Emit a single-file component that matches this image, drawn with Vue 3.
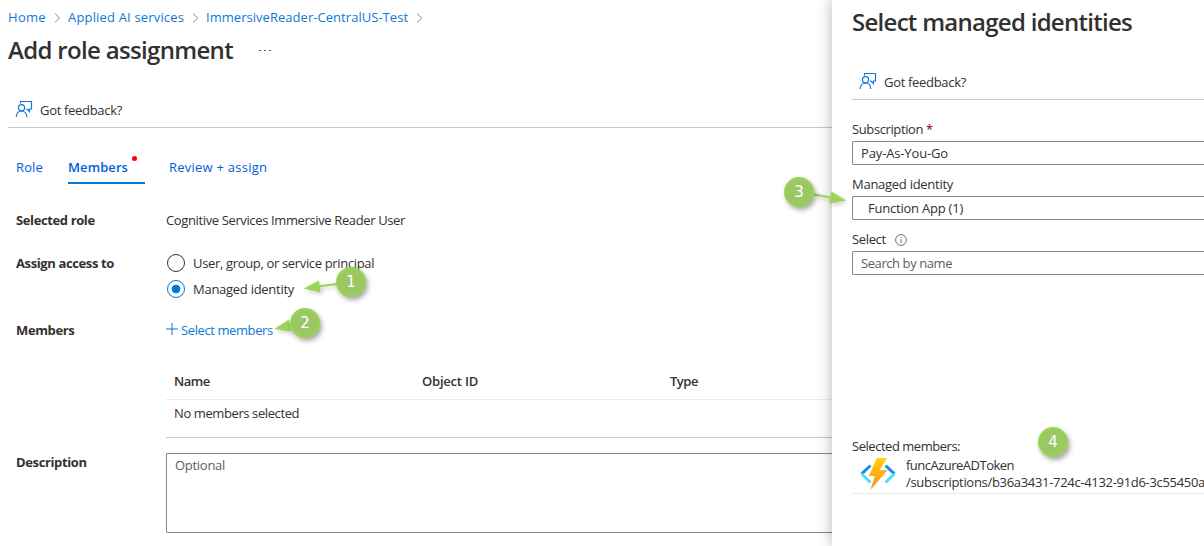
<script setup>
const crumbs = [
  { text: 'Home', cls: 'c1' },
  { text: 'Applied AI services', cls: 'c2' },
  { text: 'ImmersiveReader-CentralUS-Test', cls: 'c3' },
]
const pins = [
  { n: 1, cls: 'p1' },
  { n: 2, cls: 'p2' },
  { n: 3, cls: 'p3' },
  { n: 4, cls: 'p4' },
]
</script>

<template>
  <div class="page">
    <main class="blade">
      <nav class="crumbs">
        <template v-for="c in crumbs" :key="c.text">
          <a :class="c.cls">{{ c.text }}</a>
          <svg class="chev" width="7" height="10" viewBox="0 0 7 10"><path d="M1 .6 5.6 5 1 9.4" /></svg>
        </template>
      </nav>
      <header class="title-row">
        <h1>Add role assignment</h1>
        <svg class="dots" width="12" height="3" viewBox="0 0 12 3"><path d="M0 1h2v1H0zM5 1h2v1H5zM10 1h2v1h-2z" /></svg>
      </header>
      <div class="command">
        <svg class="feedback" width="18" height="18" viewBox="0 0 18 18">
          <path d="M5.500 3.500v-2h11v7.500h-2v2.500l-2.500-2.500h-1" /><circle cx="6.500" cy="7.800" r="3.100" /><path d="M1.200 17c.3-3.800 2.300-6 5.300-6s5 2.200 5.300 6" />
        </svg>
        <span class="ask">Got feedback?</span>
      </div>
      <div class="tabs">
        <a class="tab role">Role</a>
        <a class="tab active">Members<i class="dot"></i></a>
        <a class="tab review">Review + assign</a>
      </div>
      <div class="row selected">
        <b>Selected role</b><span class="cog">Cognitive Services Immersive Reader User</span>
      </div>
      <div class="row access">
        <b>Assign access to</b>
        <div class="radios">
          <label><i class="radio"></i><span class="usr">User, group, or service principal</span></label>
          <label><i class="radio on"></i><span class="mi">Managed identity</span></label>
        </div>
      </div>
      <div class="row members">
        <b>Members</b>
        <a class="select"><svg width="12" height="12" viewBox="0 0 12 12"><path d="M6 0v12M0 6h12" /></svg><span>Select members</span></a>
      </div>
      <div class="table">
        <div class="th"><span>Name</span><span class="oid">Object ID</span><span>Type</span></div>
        <div class="td">No members selected</div>
      </div>
      <div class="row desc">
        <b>Description</b>
        <div class="area">Optional</div>
      </div>
    </main>

    <aside class="panel">
      <h2>Select managed identities</h2>
      <div class="command">
        <svg class="feedback" width="18" height="18" viewBox="0 0 18 18">
          <path d="M5.500 3.500v-2h11v7.500h-2v2.500l-2.500-2.500h-1" /><circle cx="6.500" cy="7.800" r="3.100" /><path d="M1.200 17c.3-3.800 2.300-6 5.300-6s5 2.200 5.300 6" />
        </svg>
        <span class="ask">Got feedback?</span>
      </div>
      <div class="label sub">Subscription <em>*</em></div>
      <div class="input pay">Pay-As-You-Go</div>
      <div class="label mi">Managed identity</div>
      <div class="input fn">Function App (1)</div>
      <div class="label sel">Select
        <svg width="12" height="12" viewBox="0 0 12 12"><circle cx="6" cy="6" r="5.4" /><path d="M6 5v4M6 2.800v1.200" /></svg>
      </div>
      <div class="input search">Search by name</div>
      <div class="picked">
        <div class="heading">Selected members:</div>
        <div class="item">
          <svg class="func" width="36" height="32" viewBox="0 0 36 32">
            <defs>
              <linearGradient id="bolt" x1="0" y1="0" x2="0" y2="1"><stop offset="0" stop-color="#fed20c" /><stop offset=".5" stop-color="#fcae17" /><stop offset="1" stop-color="#f78d1e" /></linearGradient>
            </defs>
            <path d="M10.500 7.500 1.600 15.800" class="dark" /><path d="m1.600 15.800 8.900 8.700" class="light" />
            <path d="m25.500 7.500 8.900 8.300" class="dark" /><path d="m34.400 15.800-8.900 8.700" class="light" />
            <path d="M16.800 0H27l-7.200 12h7.700L10.400 32l4.400-14H8.800z" fill="url(#bolt)" />
          </svg>
          <div class="lines"><div class="name">funcAzureADToken</div><div class="path">/subscriptions/b36a3431-724c-4132-91d6-3c55450a</div></div>
        </div>
      </div>
    </aside>

    <svg class="arrows" width="1204" height="546" viewBox="0 0 1204 546">
      <path d="M337 284 318 286.500" /><path class="head" d="m303.500 288.500 15.500-8 1.500 12z" />
      <path d="m293 325-4 .5" /><path class="head" d="m274 329 15-9.500 2 12z" />
      <path d="m814 194.500 17 3" /><path class="head" d="m846 200.500-14.500-9-2.500 12z" />
    </svg>
    <div v-for="p in pins" :key="p.n" class="pin" :class="p.cls">{{ p.n }}</div>
  </div>
</template>

<style>
body { background: #fff; overflow: hidden; }
</style>
<style scoped>
* { box-sizing: border-box; }
.page { position: relative; display: flex; width: 1204px; height: 546px; overflow: hidden; font: 13px/18px "Open Sans", sans-serif; color: #323130; background: #fff; white-space: nowrap; letter-spacing: -.35px; }
svg { flex: none; fill: none; }
.blade { width: 832px; height: 546px; padding: 8px 0 0 8px; overflow: hidden; }
a { color: #0f78d4; }
.crumbs { display: flex; align-items: center; height: 18px; }
.c1 { width: 38px; letter-spacing: .3px; }
.c2 { width: 116px; letter-spacing: .17px; }
.c3 { width: 202px; letter-spacing: .04px; }
.chev { margin: 1px 7px 0 8px; stroke: #8a8886; }
.title-row { display: flex; align-items: center; height: 33px; margin-top: 7px; }
h1, h2 { margin: 0; font-size: 24px; line-height: 32px; font-weight: 600; }
h1 { width: 225px; letter-spacing: -.67px; }
.dots { margin: 2px 0 0 26px; fill: #605e5c; }
.command { display: flex; align-items: center; height: 35px; border-bottom: 1px solid #c8c6c4; padding-left: 7px; }
.blade .command { margin-top: 27px; }
.feedback { stroke: #0f78d4; stroke-width: 1.2; margin-top: -2px; }
.ask { margin-left: 7px; letter-spacing: -.31px; }
.tabs { display: flex; height: 28px; margin-top: 28px; padding-left: 8px; line-height: 23px; }
.tab { color: #015cda; }
.role { width: 52px; letter-spacing: .14px; }
.active { position: relative; width: 77px; font-weight: 600; letter-spacing: .09px; border-bottom: 2px solid #0078d4; }
.dot { position: absolute; left: 64px; top: 0; width: 5px; height: 5px; border-radius: 50%; background: #f00; }
.review { margin-left: 24px; letter-spacing: .24px; }
.row { display: flex; padding-left: 8px; }
.row b { width: 150px; font-weight: 700; letter-spacing: -.38px; }
.selected { margin-top: 27px; }
.cog { letter-spacing: -.37px; }
.access { margin-top: 25px; }
.radios { display: flex; flex-direction: column; gap: 8px; }
.radios label { display: flex; height: 18px; }
.radio { width: 18px; height: 18px; margin: 0 8px 0 1px; border: 1px solid #323130; border-radius: 50%; }
.radio.on { border-color: #0078d4; background: radial-gradient(circle, #0078d4 4px, #fff 4.700px); }
.usr { letter-spacing: -.34px; }
.mi { letter-spacing: -.27px; }
.members { margin-top: 23px; }
.select { display: flex; letter-spacing: -.4px; }
.select svg { margin: 2px 3px 0 0; stroke: #0f78d4; }
.table { margin: 24px 0 0 158px; height: 75px; border-bottom: 1px solid #c8c6c4; }
.th { display: grid; grid-template-columns: 248px 248px 1fr; height: 37px; padding-left: 8px; line-height: 36px; border-bottom: 1px solid #edebe9; font-weight: 600; letter-spacing: -.5px; }
.oid { letter-spacing: -.21px; }
.td { padding: 4px 8px; letter-spacing: -.4px; }
.desc { margin-top: 15px; }
.area { flex: 1; height: 80px; padding: 2px 8px; border: 1px solid #8a8886; border-right: 0; border-radius: 2px 0 0 2px; color: #605e5c; letter-spacing: -.28px; }

.panel { position: relative; width: 372px; height: 546px; padding: 6px 0 0 20px; background: #fff; box-shadow: 0 0 14px rgba(0, 0, 0, .3); }
h2 { letter-spacing: -.72px; }
.panel .command { margin-top: 27px; }
.label { height: 18px; }
.sub { margin-top: 20px; letter-spacing: -.39px; }
.sub em { color: #a4262c; font-style: normal; font-weight: 600; }
.input { height: 24px; margin: 3px 0 10px; padding-left: 8px; line-height: 23px; border: 1px solid #8a8886; border-right: 0; border-radius: 2px 0 0 2px; }
.pay { letter-spacing: -.14px; }
.fn { padding-left: 15px; letter-spacing: -.22px; }
.sel { display: flex; align-items: center; gap: 9px; }
.sel svg { margin-top: 1px; stroke: #605e5c; stroke-width: .9; }
.search { color: #605e5c; letter-spacing: -.42px; }
.picked { margin-top: 162px; border-bottom: 1px solid #edebe9; height: 57px; }
.heading { letter-spacing: -.47px; }
.item { display: flex; padding-left: 8px; }
.func { margin-top: 3px; }
.dark { stroke: #1a8ee0; stroke-width: 3; }
.light { stroke: #4fdcf8; stroke-width: 3; }
.lines { margin-left: 10px; line-height: 17px; padding-top: 2px; }
.name { letter-spacing: -.51px; }
.path { letter-spacing: -.31px; }

.arrows { position: absolute; left: 0; top: 0; stroke: #9bd556; stroke-width: 2; filter: drop-shadow(2px 2px 2px rgba(0, 0, 0, .2)); }
.head { fill: #9bd556; stroke: none; }
.pin { position: absolute; width: 30px; height: 30px; border: 2px solid #98d550; border-radius: 50%; background: #9bc765; color: #fff; font: 15px/27px "DejaVu Sans", sans-serif; letter-spacing: 0; text-align: center; box-shadow: 2px 3px 5px rgba(0, 0, 0, .35); }
.p1 { left: 336px; top: 267px; }
.p2 { left: 290px; top: 308px; }
.p3 { left: 784px; top: 177px; }
.p4 { left: 1038px; top: 427px; }
</style>
